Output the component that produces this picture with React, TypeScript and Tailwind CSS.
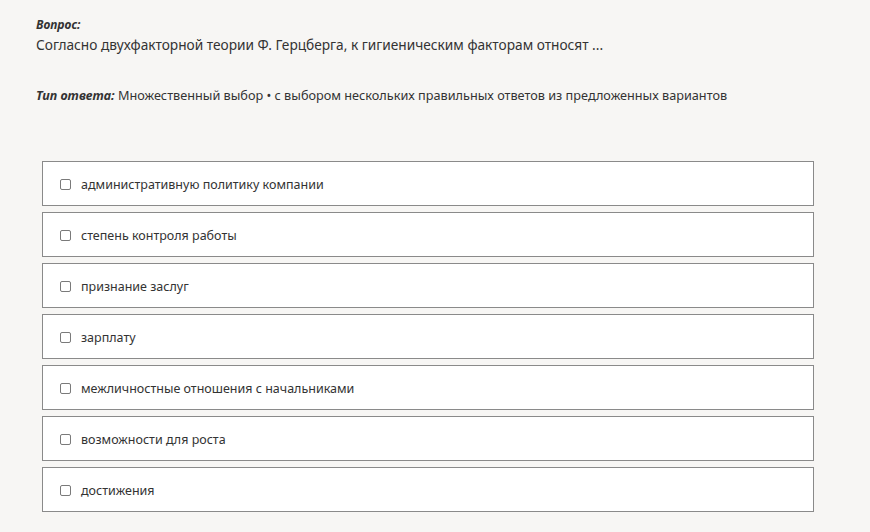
const options = [
  "административную политику компании",
  "степень контроля работы",
  "признание заслуг",
  "зарплату",
  "межличностные отношения с начальниками",
  "возможности для роста",
  "достижения",
];

export default function App() {
  return (
    <div
      className="min-h-[532px] w-full bg-[#f7f6f4] text-[#333333] text-[13px]"
      style={{ fontFamily: '"Noto Sans", "Open Sans", sans-serif' }}
    >
      <div className="pl-[36px] pt-[16px]">
        <div className="text-[12px] font-bold italic leading-[18px]">Вопрос:</div>
        <div className="leading-[20px] mt-[1px] text-[13.7px]">
          Согласно двухфакторной теории Ф. Герцберга, к гигиеническим факторам относят ...
        </div>
        <div className="mt-[30px] leading-[20px] text-[12.7px]">
          <span className="font-bold italic text-[12.6px]">Тип ответа:</span> Множественный выбор • с выбором нескольких правильных ответов из предложенных вариантов
        </div>
      </div>
      <div className="ml-[42px] w-[772px] mt-[55px] flex flex-col gap-[6px]">
        {options.map((o, i) => (
          <label
            key={i}
            className="flex items-center h-[45px] bg-white border border-[#8a8a8a] pl-[17px] pt-[2px]"
          >
            <span className="w-[11px] h-[11px] border border-[#7a7a7a] rounded-[2px] bg-white shrink-0" />
            <span className="ml-[10px] leading-[20px] text-[12.5px]">{o}</span>
          </label>
        ))}
      </div>
    </div>
  );
}
